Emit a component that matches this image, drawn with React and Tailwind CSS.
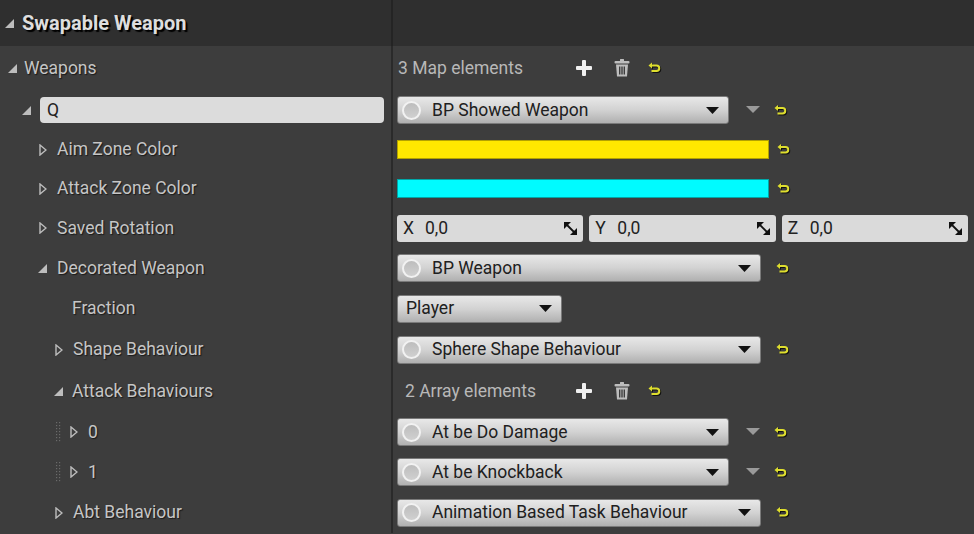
import React from 'react';

const font = { fontFamily: 'Roboto, "Liberation Sans", sans-serif' };

function Expanded({ className = '' }) {
  return (
    <svg width="9" height="9" viewBox="0 0 9 9" className={className}>
      <polygon points="9,0 9,9 0,9" fill="#bdbdbd" />
    </svg>
  );
}

function Collapsed({ className = '' }) {
  return (
    <svg width="8" height="12" viewBox="0 0 8 12" className={className}>
      <polygon points="1,1 7,6 1,11" fill="none" stroke="#bdbdbd" strokeWidth="1.4" />
    </svg>
  );
}

function Reset() {
  return (
    <svg width="13" height="13" viewBox="0 0 13 13" className="drop-shadow-[1px_1px_0_#111]">
      <path d="M3 4 H8.5 A2.7 2.7 0 0 1 8.5 9.5 H3.5" fill="none" stroke="#dede2e" strokeWidth="2" />
      <path d="M0.5 4 L4 1 L4 7 Z" fill="#dede2e" />
    </svg>
  );
}

function GrayArrow() {
  return (
    <svg width="14" height="8" viewBox="0 0 14 8">
      <polygon points="0,0 14,0 7,7" fill="#9a9a9a" />
    </svg>
  );
}

function Plus() {
  return (
    <svg width="18" height="18" viewBox="0 0 18 18">
      <rect x="7" y="1" width="4" height="16" rx="1" fill="#f0f0f0" />
      <rect x="1" y="7" width="16" height="4" rx="1" fill="#f0f0f0" />
    </svg>
  );
}

function Trash() {
  return (
    <svg width="16" height="19" viewBox="0 0 16 19">
      <rect x="6" y="0.5" width="4" height="2" rx="0.5" fill="#bdbdbd" />
      <rect x="0.5" y="2.5" width="15" height="2.5" rx="1" fill="#bdbdbd" />
      <path d="M2 6 H14 L13 18 H3 Z" fill="#bdbdbd" />
      <rect x="5" y="8" width="1.4" height="8" fill="#3d3d3d" />
      <rect x="7.3" y="8" width="1.4" height="8" fill="#3d3d3d" />
      <rect x="9.6" y="8" width="1.4" height="8" fill="#3d3d3d" />
    </svg>
  );
}

function BlackArrow() {
  return (
    <svg width="13" height="7" viewBox="0 0 13 7">
      <polygon points="0,0 13,0 6.5,7" fill="#111" />
    </svg>
  );
}

function Dropdown({ text, width, circle = true }) {
  return (
    <div
      className="flex h-[28px] items-center rounded-[3px] border border-[#7a7a7a] bg-gradient-to-b from-[#e8e8e8] via-[#d2d2d2] to-[#b0b0b0] pr-[9px] text-[17.5px] text-[#202020]"
      style={{ width }}
    >
      {circle ? (
        <div className="ml-[4px] mr-[11px] h-[19px] w-[19px] shrink-0 rounded-full border-2 border-[#f2f2f2] bg-gradient-to-b from-[#bdbdbd] to-[#d0d0d0]" />
      ) : (
        <div className="w-[8px]" />
      )}
      <span className="flex-1 truncate">{text}</span>
      <BlackArrow />
    </div>
  );
}

function VecBox({ axis }) {
  return (
    <div className="flex h-[27px] flex-1 items-center rounded-[3px] bg-[#dadada] px-[6px] text-[17.5px] text-[#222]">
      <span className="w-[22px]">{axis}</span>
      <span className="flex-1">0,0</span>
      <svg width="13" height="13" viewBox="0 0 13 13">
        <polygon points="0,0 7,0 0,7" fill="#111" />
        <polygon points="13,13 6,13 13,6" fill="#111" />
        <line x1="2" y1="2" x2="11" y2="11" stroke="#111" strokeWidth="1.8" />
      </svg>
    </div>
  );
}

function Row({ h, indent, label, children }) {
  return (
    <div className="flex" style={{ height: h }}>
      <div
        className="flex w-[391px] shrink-0 items-center text-[17.5px] text-[#c6c6c6] [text-shadow:1px_1px_1px_#1a1a1a]"
        style={{ paddingLeft: indent }}
      >
        {label}
      </div>
      <div className="w-[2px] bg-[#2a2a2a]" />
      <div className="relative flex flex-1 items-center pl-[4px]">{children}</div>
    </div>
  );
}

function Label({ toggle, text, gap = 10 }) {
  return (
    <div className="flex items-center">
      <div className="flex w-[9px] justify-center">
        {toggle === 'open' && <Expanded />}
        {toggle === 'closed' && <Collapsed />}
      </div>
      <span style={{ marginLeft: gap }}>{text}</span>
    </div>
  );
}

function Grip() {
  return (
    <svg width="6" height="20" viewBox="0 0 6 20" className="mr-[7px]">
      {[0, 1, 2, 3, 4, 5, 6].map((i) => (
        <g key={i}>
          <rect x="0" y={i * 3} width="1.2" height="1.2" fill="#6a6a6a" />
          <rect x="3" y={i * 3} width="1.2" height="1.2" fill="#6a6a6a" />
        </g>
      ))}
    </svg>
  );
}

function Count({ text, pad }) {
  return (
    <>
      <span className="text-[17.5px] text-[#b8b8b8]" style={{ paddingLeft: pad }}>{text}</span>
      <div className="absolute left-[182px] top-1/2 -translate-y-1/2"><Plus /></div>
      <div className="absolute left-[221px] top-1/2 -translate-y-1/2"><Trash /></div>
      <div className="absolute left-[255px] top-1/2 -translate-y-1/2"><Reset /></div>
    </>
  );
}

export default function App() {
  return (
    <div className="h-[534px] w-[974px] overflow-hidden bg-[#3d3d3d]" style={font}>
      <div className="flex h-[46px] bg-[#2f2f2f]">
        <div className="flex w-[391px] items-center pl-[5px]">
          <Expanded />
          <span className="ml-[8px] text-[20px] font-bold text-[#dedede] [text-shadow:2px_2px_1px_#000]">
            Swapable Weapon
          </span>
        </div>
        <div className="w-[2px] bg-[#242424]" />
      </div>

      <Row h={44} indent={8} label={<Label toggle="open" text="Weapons" gap={7} />}>
        <Count text="3 Map elements" pad={1} />
      </Row>

      <Row
        h={40}
        indent={22}
        label={
          <div className="flex items-center">
            <Expanded />
            <div className="ml-[9px] flex h-[26px] w-[344px] items-center rounded-[4px] bg-[#dcdcdc] px-[7px] text-[#222] [text-shadow:none]">
              Q
            </div>
          </div>
        }
      >
        <Dropdown text="BP Showed Weapon" width={332} />
        <div className="ml-[17px]"><GrayArrow /></div>
        <div className="ml-[14px]"><Reset /></div>
      </Row>

      <Row h={39} indent={38} label={<Label toggle="closed" text="Aim Zone Color" />}>
        <div className="h-[19px] w-[372px] border border-[#b3a200] bg-[#ffe800]" />
        <div className="ml-[8px]"><Reset /></div>
      </Row>

      <Row h={39} indent={38} label={<Label toggle="closed" text="Attack Zone Color" />}>
        <div className="h-[19px] w-[372px] border border-[#00a7a7] bg-[#00fbff]" />
        <div className="ml-[8px]"><Reset /></div>
      </Row>

      <Row h={40} indent={38} label={<Label toggle="closed" text="Saved Rotation" />}>
        <div className="flex w-[571px] gap-[6px]">
          <VecBox axis="X" />
          <VecBox axis="Y" />
          <VecBox axis="Z" />
        </div>
      </Row>

      <Row h={40} indent={38} label={<Label toggle="open" text="Decorated Weapon" />}>
        <Dropdown text="BP Weapon" width={364} />
        <div className="ml-[15px]"><Reset /></div>
      </Row>

      <Row h={41} indent={72} label={<span>Fraction</span>}>
        <Dropdown text="Player" width={165} circle={false} />
      </Row>

      <Row h={41} indent={54} label={<Label toggle="closed" text="Shape Behaviour" />}>
        <Dropdown text="Sphere Shape Behaviour" width={364} />
        <div className="ml-[15px]"><Reset /></div>
      </Row>

      <Row h={42} indent={54} label={<Label toggle="open" text="Attack Behaviours" gap={9} />}>
        <Count text="2 Array elements" pad={8} />
      </Row>

      <Row
        h={40}
        indent={56}
        label={
          <div className="flex items-center">
            <Grip />
            <Label toggle="closed" text="0" />
          </div>
        }
      >
        <Dropdown text="At be Do Damage" width={332} />
        <div className="ml-[17px]"><GrayArrow /></div>
        <div className="ml-[14px]"><Reset /></div>
      </Row>

      <Row
        h={40}
        indent={56}
        label={
          <div className="flex items-center">
            <Grip />
            <Label toggle="closed" text="1" />
          </div>
        }
      >
        <Dropdown text="At be Knockback" width={332} />
        <div className="ml-[17px]"><GrayArrow /></div>
        <div className="ml-[14px]"><Reset /></div>
      </Row>

      <Row h={41} indent={54} label={<Label toggle="closed" text="Abt Behaviour" />}>
        <Dropdown text="Animation Based Task Behaviour" width={364} />
        <div className="ml-[15px]"><Reset /></div>
      </Row>
    </div>
  );
}
